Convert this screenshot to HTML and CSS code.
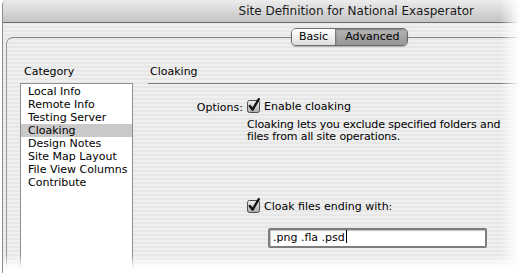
FILE: index.html
```html
<!DOCTYPE html>
<html>
<head>
    <link rel="stylesheet" href="styles.css">
</head>
<body>
    <div class="window">
        <div class="titlebar">Site Definition for National Exasperator</div>

        <div class="tabs">
            <div class="segmented">
                <span class="seg">Basic</span>
                <span class="seg active">Advanced</span>
            </div>
        </div>

        <div class="panel">
            <div class="sidebar">
                <div class="label">Category</div>
                <ul class="list">
                    <li>Local Info</li>
                    <li>Remote Info</li>
                    <li>Testing Server</li>
                    <li class="selected">Cloaking</li>
                    <li>Design Notes</li>
                    <li>Site Map Layout</li>
                    <li>File View Columns</li>
                    <li>Contribute</li>
                </ul>
            </div>

            <div class="content">
                <div class="section-title">Cloaking</div>

                <div class="form">
                    <div class="form-label">Options:</div>
                    <div class="form-field">
                        <label class="check">
                            <svg class="box" width="14" height="15" viewBox="0 0 14 15">
                                <defs>
                                    <linearGradient id="cb" x1="0" y1="0" x2="0" y2="1">
                                        <stop offset="0" stop-color="#f2f2f2"/>
                                        <stop offset="1" stop-color="#a9a9a9"/>
                                    </linearGradient>
                                </defs>
                                <rect x="0.5" y="2.5" width="12" height="12" rx="2" fill="url(#cb)" stroke="#505050"/>
                                <path d="M2.8 8 L5.6 11.6 L11.8 1.2" fill="none" stroke="#111" stroke-width="2.4" stroke-linecap="round" stroke-linejoin="round"/>
                            </svg>
                            Enable cloaking
                        </label>
                        <p class="hint">Cloaking lets you exclude specified folders and<br>files from all site operations.</p>

                        <label class="check second">
                            <svg class="box" width="14" height="15" viewBox="0 0 14 15">
                                <rect x="0.5" y="2.5" width="12" height="12" rx="2" fill="url(#cb)" stroke="#505050"/>
                                <path d="M2.8 8 L5.6 11.6 L11.8 1.2" fill="none" stroke="#111" stroke-width="2.4" stroke-linecap="round" stroke-linejoin="round"/>
                            </svg>
                            Cloak files ending with:
                        </label>
                        <div class="textfield">.png .fla .psd<span class="caret"></span></div>
                    </div>
                </div>
            </div>
        </div>

        <div class="fade-right"></div>
        <div class="fade-bottom"></div>
    </div>
</body>
</html>
```

FILE: styles.css
```css
body {
    margin: 0;
    width: 528px;
    height: 273px;
    overflow: hidden;
    background: #fff;
    font-family: 'DejaVu Sans', sans-serif;
    font-size: 11px;
    color: #000;
}

.window {
    position: relative;
    height: 273px;
    margin-left: 2px;
    border-left: 1px solid #8e8e8e;
    border-top-left-radius: 5px;
    background: repeating-linear-gradient(#efefef 0, #efefef 2px, #e7e7e7 2px, #e7e7e7 4px);
    overflow: hidden;
}

.titlebar {
    height: 22px;
    line-height: 23px;
    border-bottom: 1px solid #6f6f6f;
    background: linear-gradient(#ececec, #d8d8d8 50%, #c3c3c3);
    text-align: right;
    padding-right: 54px;
    font-size: 12px;
    color: #1a1a1a;
}

.tabs {
    position: relative;
    z-index: 1;
    height: 18px;
    margin-top: 5px;
    padding-left: 288px;
}

.segmented {
    display: inline-flex;
    height: 16px;
    border: 1px solid #6c6c6c;
    border-radius: 5px;
    overflow: hidden;
    box-shadow: 0 1px 1px rgba(0, 0, 0, 0.25);
}

.seg {
    line-height: 16px;
    padding: 0 7px;
    background: linear-gradient(#ffffff, #f0f0f0 50%, #dcdcdc);
}

.seg.active {
    padding: 0 8px 0 9px;
    border-left: 1px solid #7a7a7a;
    background: linear-gradient(#b9b9b9, #a4a4a4 50%, #989898);
    box-shadow: inset 0 1px 2px rgba(0, 0, 0, 0.3);
}

.panel {
    display: flex;
    margin: -9px 0 0 3px;
    padding: 27px 0 0 13px;
    border-top: 1px solid #858585;
    border-left: 1px solid #9a9a9a;
    border-top-left-radius: 7px;
    height: 240px;
}

.sidebar {
    width: 113px;
    margin-right: 15px;
}

.label {
    padding-left: 4px;
    line-height: 13px;
}

.list {
    list-style: none;
    margin: 5px 0 0;
    padding: 1px 0 0;
    height: 200px;
    background: #fff;
    border: 1px solid #8f8f8f;
    border-bottom: none;
}

.list li {
    line-height: 13px;
    padding-left: 7px;
    white-space: nowrap;
}

.list li.selected {
    background: #c9c9c9;
}

.content {
    flex: 1;
}

.section-title {
    padding-left: 2px;
    line-height: 13px;
    padding-bottom: 5px;
    border-bottom: 1px solid #7b7b7b;
}

.form {
    display: grid;
    grid-template-columns: 95px 1fr;
    column-gap: 4px;
    margin-top: 16px;
}

.form-label {
    text-align: right;
    line-height: 13px;
    padding-top: 1px;
}

.check {
    display: flex;
    align-items: flex-end;
    gap: 3px;
    height: 13px;
    line-height: 13px;
}

.box {
    flex: none;
    margin-top: -3px;
}

.check.second {
    margin-top: 57px;
}

.hint {
    margin: 6px 0 0;
    line-height: 12px;
    letter-spacing: -0.12px;
}

.textfield {
    width: 212px;
    height: 16px;
    line-height: 16px;
    margin: 15px 0 0 21px;
    padding-left: 3px;
    background: #fff;
    border: 2px solid #7d7d7d;
    border-radius: 2px;
    box-shadow: inset 1px 1px 1px rgba(0, 0, 0, 0.25);
}

.caret {
    display: inline-block;
    width: 1px;
    height: 13px;
    margin-left: 1px;
    vertical-align: -2px;
    background: #000;
}

.fade-right {
    position: absolute;
    top: 0;
    right: 0;
    width: 28px;
    height: 100%;
    background: linear-gradient(to right, rgba(255, 255, 255, 0), #fff 70%);
}

.fade-bottom {
    position: absolute;
    left: 0;
    bottom: 0;
    width: 100%;
    height: 18px;
    background: linear-gradient(rgba(255, 255, 255, 0), #fff 75%);
}
```
